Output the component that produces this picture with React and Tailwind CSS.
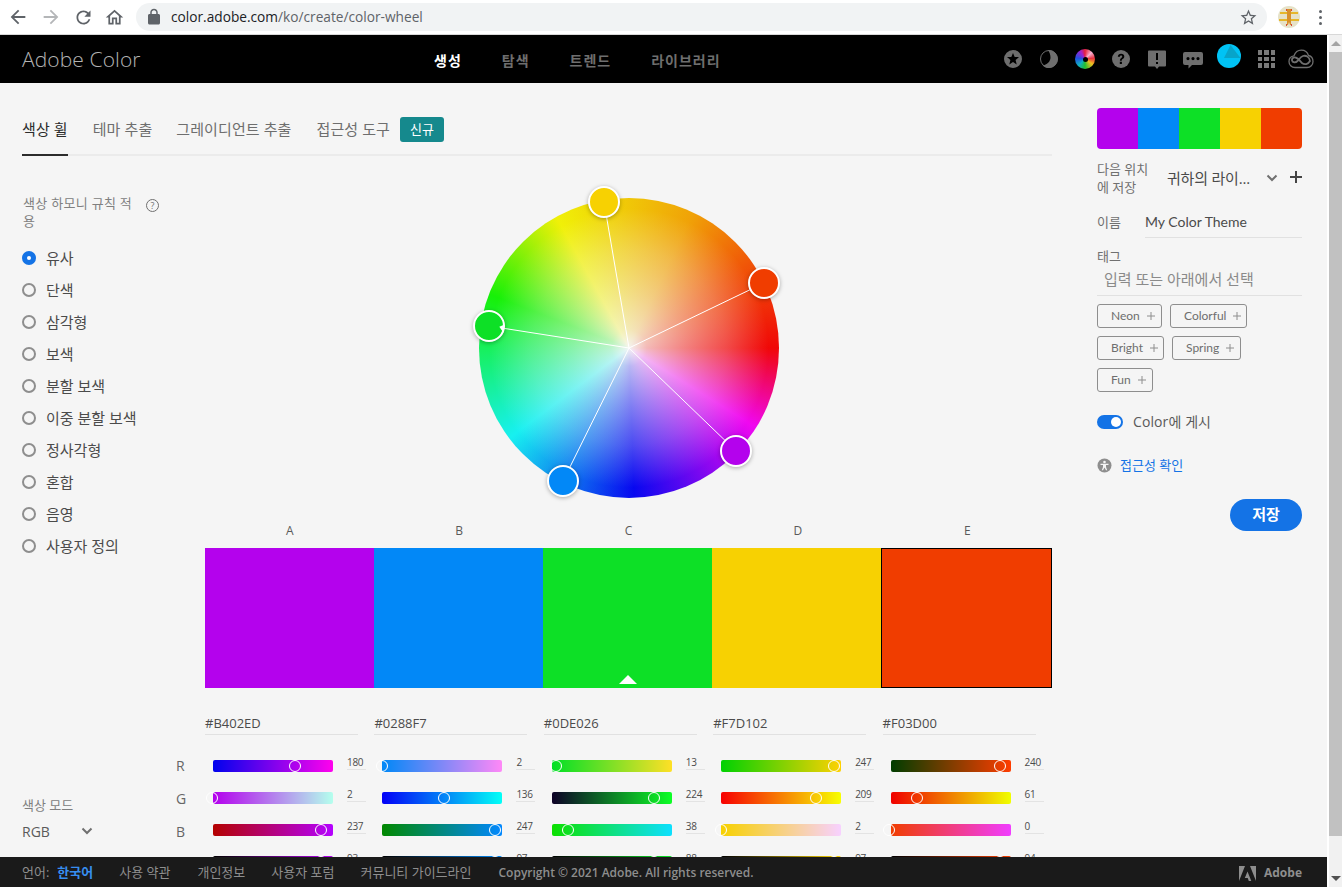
import React from "react";

const colors = [
  { name: "A", hex: "#B402ED", rgb: [180, 2, 237], v: 93 },
  { name: "B", hex: "#0288F7", rgb: [2, 136, 247], v: 97 },
  { name: "C", hex: "#0DE026", rgb: [13, 224, 38], v: 88 },
  { name: "D", hex: "#F7D102", rgb: [247, 209, 2], v: 97 },
  { name: "E", hex: "#F03D00", rgb: [240, 61, 0], v: 94 },
];

const rules = ["유사", "단색", "삼각형", "보색", "분할 보색", "이중 분할 보색", "정사각형", "혼합", "음영", "사용자 정의"];

const handles = [
  { x: 125, y: 4, fill: "#F7D102" },
  { x: 285, y: 85, fill: "#F03D00" },
  { x: 257, y: 253, fill: "#B402ED" },
  { x: 84, y: 283, fill: "#0288F7" },
  { x: 10, y: 128, fill: "#0DE026" },
];

const sliderGradient = (rgb, i) => {
  const from = [...rgb];
  const to = [...rgb];
  from[i] = 0;
  to[i] = 255;
  return `linear-gradient(to right, rgb(${from.join(",")}), rgb(${to.join(",")}))`;
};

const Slider = ({ background, value, percent }) => (
  <div className="flex items-start h-[17px] mb-[15px]">
    <div className="relative w-[120px] h-[12px] ml-[8px] mt-[5px] rounded-[2px]" style={{ background }}>
      <span
        className="absolute top-0 w-[12px] h-[12px] rounded-full border border-white"
        style={{ left: -7.5 + percent * 118 }}
      />
    </div>
    <div className="w-[19px] ml-[14px] h-[15px] border-b border-[#e3e3e3] text-[10px] tracking-[-0.3px] leading-[14px] text-[#4b4b4b]">{value}</div>
  </div>
);

const ColorColumn = ({ color }) => (
  <div>
    <div className="w-[153px] h-[25px] border-b border-[#e1e1e1] text-[13px] leading-[26px] text-[#4b4b4b]">{color.hex}</div>
    <div className="mt-[20px]">
      {color.rgb.map((value, i) => (
        <Slider key={i} value={value} percent={value / 255} background={sliderGradient(color.rgb, i)} />
      ))}
      <Slider
        value={color.v}
        percent={color.v / 100}
        background={`linear-gradient(to right, #000, rgb(${color.rgb.join(",")}))`}
      />
    </div>
  </div>
);

const ColorWheel = () => (
  <div className="relative w-[300px] h-[300px] mx-auto rounded-full [background:radial-gradient(circle_closest-side,rgba(245,245,245,0.98)_0%,rgba(245,245,245,0.75)_12%,rgba(245,245,245,0.52)_38%,rgba(245,245,245,0.3)_65%,rgba(245,245,245,0.03)_93%),conic-gradient(from_90deg,#f00000_0deg,#f000f0_32deg,#0000f0_88deg,#10f0f0_143deg,#10f000_201deg,#f0f000_241deg,#f0a000_295deg,#f05000_325deg,#f00000_360deg)]">
    <svg className="absolute inset-0 overflow-visible" width="300" height="300" viewBox="0 0 300 300">
      {handles.map((h, i) => (
        <line key={i} x1="150" y1="150" x2={h.x} y2={h.y} stroke="#fff" strokeWidth="1" />
      ))}
      {handles.map((h, i) => (
        <circle
          key={i}
          cx={h.x}
          cy={h.y}
          r="15"
          fill={h.fill}
          stroke="#fff"
          strokeWidth="2"
          className="[filter:drop-shadow(0_1px_2px_rgba(0,0,0,0.3))]"
        />
      ))}
      <path d="M20.3 128.7 25.6 126.5 24.5 134.7Z" fill="#fff" />
    </svg>
  </div>
);

const Chevron = ({ className }) => (
  <svg className={className} width="12" height="8" viewBox="0 0 12 8" fill="none">
    <path d="M1.5 1.5 6 6l4.5-4.5" stroke="currentColor" strokeWidth="2" />
  </svg>
);

const ChromeIcon = ({ d, className, size = 24 }) => (
  <svg className={className} width={size} height={size} viewBox="0 0 24 24" fill="currentColor">
    <path d={d} />
  </svg>
);

const HeaderIcons = () => (
  <div className="ml-auto flex items-center pr-[8px] text-[#6e6e6e]">
    <div className="w-[36px] flex justify-center">
      <svg width="22" height="22" viewBox="0 0 22 22">
        <path
          fillRule="evenodd"
          fill="currentColor"
          d="M11 2a9 9 0 1 1 0 18 9 9 0 0 1 0-18ZM11 5l-1.7 4H5l3.4 3-1.1 4.5L11 14l3.700 2.500-1.100-4.500L17 9h-4.300Z"
        />
      </svg>
    </div>
    <div className="w-[36px] flex justify-center">
      <svg width="22" height="22" viewBox="0 0 22 22">
        <circle cx="11" cy="11" r="8.500" fill="none" stroke="currentColor" strokeWidth="1" />
        <path d="M10 2A9 9 0 1 1 4.500 17.500C9 17 12.500 13.500 12.500 9.500 12.500 7 11.500 4 10 2Z" fill="currentColor" />
      </svg>
    </div>
    <div className="w-[36px] flex justify-center">
      <div className="w-[20px] h-[20px] rounded-full flex items-center justify-center bg-[conic-gradient(#e8203a_0deg,#f8b0d0_45deg,#e83040_85deg,#f0c020_125deg,#20c030_180deg,#10b0c0_225deg,#2050e0_275deg,#a020d0_330deg,#e8203a_360deg)]">
        <div className="w-[5px] h-[5px] rounded-full bg-black" />
      </div>
    </div>
    <div className="w-[36px] flex justify-center">
      <svg width="22" height="22" viewBox="0 0 22 22">
        <circle cx="11" cy="11" r="9" fill="currentColor" />
        <path d="M7.800 8.800C7.900 6.900 9.200 5.800 11.100 5.800c1.900 0 3.200 1.100 3.200 2.700 0 1.200-.6 1.900-1.500 2.500-.8.500-1 .9-1 1.700H9.900c0-1.400.4-2.100 1.400-2.800.6-.4.900-.8.900-1.300 0-.6-.4-1-1.100-1-.7 0-1.200.4-1.200 1.200ZM9.800 13.800h2.100v2.200H9.800Z" fill="#000" />
      </svg>
    </div>
    <div className="w-[36px] flex justify-center">
      <svg width="22" height="22" viewBox="0 0 22 22">
        <path fillRule="evenodd" fill="currentColor" d="M3 2.500h16a1 1 0 0 1 1 1v14a1 1 0 0 1-1 1h-6L11 21l-2-2.500H3a1 1 0 0 1-1-1v-14a1 1 0 0 1 1-1ZM10 5v7h2V5ZM10 14v2h2v-2Z" />
      </svg>
    </div>
    <div className="w-[36px] flex justify-center">
      <svg width="22" height="22" viewBox="0 0 22 22">
        <path fillRule="evenodd" fill="currentColor" d="M3 4h16a2 2 0 0 1 2 2v9a2 2 0 0 1-2 2H10l-3.500 3.500V17H3a2 2 0 0 1-2-2V6a2 2 0 0 1 2-2ZM6 9a1.600 1.600 0 1 0 0 3.200A1.600 1.600 0 0 0 6 9ZM11 9a1.600 1.600 0 1 0 0 3.200A1.600 1.600 0 0 0 11 9ZM16 9a1.600 1.600 0 1 0 0 3.200A1.600 1.600 0 0 0 16 9Z" />
      </svg>
    </div>
    <div className="w-[36px] flex justify-center -mt-[6px]">
      <svg width="24" height="24" viewBox="0 0 24 24">
        <circle cx="12" cy="12" r="12" fill="#00c3f5" />
        <path d="M13.500 1 23.500 14H7Z" fill="#07a4c9" />
      </svg>
    </div>
    <div className="w-[36px] flex justify-center">
      <div className="grid grid-cols-3 gap-[2px] ml-[3px]">
        {[...Array(9)].map((_, i) => (
          <div key={i} className="w-[4.500px] h-[4.500px] bg-[#7a7a7a]" />
        ))}
      </div>
    </div>
    <div className="w-[36px] flex justify-center">
      <svg width="26" height="20" viewBox="0 0 26 20" fill="none" stroke="currentColor">
        <path strokeWidth="1.300" d="M7 18.500C3.500 18.500 1 15.800 1 12.500 1 9.500 3.100 7.200 6 6.800 7.200 3.300 10 1.200 13.300 1.200c3.400 0 6.200 2.100 7.200 5.300 2.700.6 4.500 3 4.500 6 0 3.300-2.500 6-6 6Z" />
        <path strokeWidth="1.800" d="M22 12C21.500 8 18 6 15 7 12.500 7.800 11 10.500 9.500 12 7.500 14 4.500 13.500 4 11.500 3.500 9.500 5.500 8 7.500 8.500 10 9 12 12 14 14 16.500 16 20 15.500 22 12Z" />
      </svg>
    </div>
  </div>
);

const Tag = ({ label, className }) => (
  <div className={`flex items-center h-[24px] pl-[13px] border border-[#8e8e8e] rounded-[3px] font-['Lato',sans-serif] text-[12px] text-[#6e6e6e] ${className}`}>
    {label}
    <svg className="ml-[7px]" width="8" height="8" viewBox="0 0 8 8">
      <path d="M4 0v8M0 4h8" stroke="#8e8e8e" strokeWidth="1" />
    </svg>
  </div>
);

const RightPanel = () => (
  <aside className="w-[205px] pt-[25px] shrink-0">
    <div className="flex h-[41px] rounded-[4px] overflow-hidden">
      {colors.map((c) => (
        <div key={c.name} className="flex-1" style={{ background: c.hex }} />
      ))}
    </div>
    <div className="flex items-center mt-[11px]">
      <div className="w-[56px] text-[13px] leading-[18px] text-[#707070]">다음 위치에 저장</div>
      <div className="ml-[14px] w-[94px] text-[15px] tracking-[-0.2px] whitespace-nowrap text-[#4b4b4b]">귀하의 라이...</div>
      <Chevron className="ml-[5px] text-[#707070]" />
      <svg className="ml-[12px] -mt-[2px]" width="12" height="12" viewBox="0 0 12 12">
        <path d="M6 0v12M0 6h12" stroke="#444" strokeWidth="2" />
      </svg>
    </div>
    <div className="flex items-center mt-[12px]">
      <div className="w-[48px] text-[13px] text-[#707070]">이름</div>
      <div className="flex-1 h-[30px] leading-[27px] border-b border-[#e1e1e1] font-['Lato',sans-serif] text-[14px] text-[#4b4b4b]">My Color Theme</div>
    </div>
    <div className="mt-[9px] text-[13px] leading-[18px] text-[#707070]">태그</div>
    <div className="h-[31px] pl-[7px] leading-[28px] border-b border-[#e1e1e1] text-[15px] text-[#8a8a8a]">입력 또는 아래에서 선택</div>
    <div className="flex flex-col gap-[8px] mt-[8px]">
      <div className="flex gap-[8px]">
        <Tag label="Neon" className="w-[65px]" />
        <Tag label="Colorful" className="w-[77px]" />
      </div>
      <div className="flex gap-[8px]">
        <Tag label="Bright" className="w-[67px]" />
        <Tag label="Spring" className="w-[69px]" />
      </div>
      <Tag label="Fun" className="w-[56px]" />
    </div>
    <div className="flex items-center mt-[19px]">
      <div className="flex items-center justify-end w-[26px] h-[14px] pr-[2px] rounded-full bg-[#1473e6]">
        <div className="w-[10px] h-[10px] rounded-full bg-white" />
      </div>
      <span className="ml-[10px] text-[14px] tracking-[0.1px] text-[#5a5a5a]">Color에 게시</span>
    </div>
    <div className="flex items-center mt-[24px]">
      <svg width="15" height="15" viewBox="0 0 15 15">
        <circle cx="7.500" cy="7.500" r="7" fill="#8e8e8e" />
        <circle cx="7.500" cy="4" r="1.300" fill="#f5f5f5" />
        <path d="M3.500 5.800h8v1.200H9v2l1.200 3.300H9L7.500 9.500 6 12.300H4.800L6 9V7H3.500Z" fill="#f5f5f5" />
      </svg>
      <a className="ml-[8px] text-[13px] text-[#1473e6]">접근성 확인</a>
    </div>
    <div className="flex justify-end mt-[23px]">
      <button className="w-[72px] h-[32px] rounded-full bg-[#1473e6] text-white text-[15px] font-bold">저장</button>
    </div>
  </aside>
);

const Main = () => (
  <main className="w-[1030px] shrink-0">
    <nav className="flex items-center h-[73px] pt-[22px] border-b-2 border-[#ebebeb] text-[15px] tracking-[0.1px] text-[#6e6e6e]">
      <div className="relative h-full flex items-center text-[#2c2c2c]">
        색상 휠
        <div className="absolute left-0 right-0 -bottom-[2px] h-[2px] bg-[#2c2c2c]" />
      </div>
      <div className="ml-[25px]">테마 추출</div>
      <div className="ml-[24px]">그레이디언트 추출</div>
      <div className="ml-[25px]">접근성 도구</div>
      <div className="ml-[10px] flex items-center justify-center w-[44px] h-[25px] rounded-[3px] bg-[#15898d] text-white text-[13px]">신규</div>
    </nav>
    <div className="flex">
      <div className="w-[183px] shrink-0 pt-[38px]">
        <div className="flex items-start">
          <div className="w-[112px] ml-[1px] text-[13px] tracking-[0.3px] leading-[18px] text-[#808080]">색상 하모니 규칙 적용</div>
          <div className="ml-[11px] mt-[5px] flex items-center justify-center w-[13px] h-[13px] rounded-full border border-[#707070] text-[9px] leading-none text-[#707070]">?</div>
        </div>
        <div className="mt-[12px] flex flex-col">
          {rules.map((rule, i) => (
            <div key={rule} className="flex items-center h-[32px]">
              {i === 0 ? (
                <div className="flex items-center justify-center w-[14px] h-[14px] rounded-full bg-[#1473e6]">
                  <div className="w-[4px] h-[4px] rounded-full bg-white" />
                </div>
              ) : (
                <div className="w-[14px] h-[14px] rounded-full border-2 border-[#8e8e8e]" />
              )}
              <span className="ml-[10px] text-[15px] text-[#4b4b4b]">{rule}</span>
            </div>
          ))}
        </div>
        <div className="mt-[234px] text-[13px] text-[#808080]">색상 모드</div>
        <div className="flex items-center mt-[5px] text-[14px] text-[#5a5a5a]">
          <span className="w-[59px]">RGB</span>
          <Chevron className="text-[#707070]" />
        </div>
      </div>
      <div className="w-[847px] shrink-0 pt-[42px]">
        <ColorWheel />
        <div className="grid grid-cols-5 mt-[24px] text-center text-[12px] leading-[18px] text-[#5a5a5a]">
          {colors.map((c) => (
            <div key={c.name}>{c.name}</div>
          ))}
        </div>
        <div className="flex h-[140px] mt-[8px]">
          {colors.map((c, i) => (
            <div
              key={c.name}
              className={`relative ${i === 4 ? "w-[171px] border border-black" : "w-[169px]"}`}
              style={{ background: c.hex }}
            >
              {i === 2 && (
                <div className="absolute bottom-[4px] left-[76px] w-0 h-0 border-x-[9px] border-x-transparent border-b-[9px] border-b-white" />
              )}
            </div>
          ))}
        </div>
        <div className="relative grid grid-cols-5 mt-[22px]">
          <div className="absolute -left-[29px] top-[47px] flex flex-col gap-[15px] text-[14px] leading-[18px] text-[#666]">
            <span>R</span>
            <span>G</span>
            <span>B</span>
          </div>
          {colors.map((c) => (
            <ColorColumn key={c.name} color={c} />
          ))}
        </div>
      </div>
    </div>
  </main>
);

const Footer = () => (
  <footer className="flex items-center h-[30px] shrink-0 pl-[22px] pr-[25px] pt-[2px] bg-[#1a1a1a] text-[13px] text-[#8e8e8e]">
    <span>언어:</span>
    <span className="ml-[8px] font-bold text-[#378ef0]">한국어</span>
    <span className="ml-[26px]">사용 약관</span>
    <span className="ml-[27px]">개인정보</span>
    <span className="ml-[26px]">사용자 포럼</span>
    <span className="ml-[26px]">커뮤니티 가이드라인</span>
    <span className="ml-[27px] text-[12px] font-semibold">Copyright © 2021 Adobe. All rights reserved.</span>
    <svg className="ml-auto" width="17" height="15" viewBox="0 0 17 15" fill="#8e8e8e">
      <path d="M0 0h6L0 15ZM11 0h6v15ZM8.500 5.500 12.300 15H9.800L8.700 12H5.800Z" />
    </svg>
    <span className="ml-[8px] text-[12px] font-bold">Adobe</span>
  </footer>
);

export default function App() {
  return (
    <div className="w-[1342px] h-[887px] flex flex-col overflow-hidden bg-white font-['Open_Sans','Noto_Sans_CJK_KR',sans-serif]">
      <div className="flex items-center h-[35px] shrink-0 border-b border-[#d8d8d8] text-[#5f6368]">
        <ChromeIcon className="ml-[7px]" size={22} d="M20 11H7.830l5.590-5.590L12 4l-8 8 8 8 1.410-1.410L7.830 13H20v-2z" />
        <ChromeIcon className="ml-[11px] text-[#b4b6b8]" size={22} d="M12 4l-1.410 1.410L16.170 11H4v2h12.170l-5.580 5.590L12 20l8-8z" />
        <ChromeIcon className="ml-[11px]" size={21} d="M17.650 6.350C16.200 4.900 14.210 4 12 4c-4.420 0-7.990 3.580-7.990 8s3.570 8 7.990 8c3.730 0 6.840-2.550 7.730-6h-2.080c-.82 2.330-3.040 4-5.650 4-3.310 0-6-2.690-6-6s2.690-6 6-6c1.660 0 3.140.69 4.220 1.780L13 11h7V4l-2.350 2.350z" />
        <ChromeIcon className="ml-[10px]" size={21} d="M12 5.690l5 4.500V18h-2v-6H9v6H7v-7.810l5-4.500M12 3L2 12h3v8h6v-6h2v6h6v-8h3L12 3z" />
        <div className="flex items-center ml-[11px] w-[1131px] h-[28px] rounded-full bg-[#f1f3f4]">
          <ChromeIcon className="ml-[9px]" size={18} d="M18 8h-1V6c0-2.760-2.240-5-5-5S7 3.240 7 6v2H6c-1.100 0-2 .9-2 2v10c0 1.100.9 2 2 2h12c1.100 0 2-.9 2-2V10c0-1.100-.9-2-2-2zM9 6c0-1.660 1.340-3 3-3s3 1.340 3 3v2H9V6z" />
          <span className="ml-[8px] text-[13.700px] text-[#202124]">
            color.adobe.com<span className="text-[#5f6368]">/ko/create/color-wheel</span>
          </span>
          <ChromeIcon className="ml-auto mr-[9px]" size={19} d="M22 9.240l-7.190-.62L12 2 9.190 8.630 2 9.240l5.460 4.730L5.820 21 12 17.270 18.180 21l-1.630-7.030L22 9.240zM12 15.400l-3.760 2.270 1-4.280-3.320-2.880 4.380-.38L12 6.100l1.710 4.040 4.380.38-3.320 2.880 1 4.280L12 15.400z" />
        </div>
        <svg className="ml-[11px]" width="22" height="22" viewBox="0 0 22 22">
          <circle cx="11" cy="11" r="11" fill="#e6e2c8" />
          <path d="M2 6h18v2H2ZM1 13h20v2H1Z" fill="#e6b72a" />
          <path d="M9 3h4v16h-1l-1-3-1 3H9Z" fill="#d8902a" />
          <path d="M8 3h1v2H8ZM13 3h1v2h-1ZM8 18h1v2H8ZM13 18h1v2h-1Z" fill="#d84a3a" />
        </svg>
        <div className="ml-[19px] flex flex-col gap-[3px]">
          <div className="w-[3px] h-[3px] rounded-full bg-[#5f6368]" />
          <div className="w-[3px] h-[3px] rounded-full bg-[#5f6368]" />
          <div className="w-[3px] h-[3px] rounded-full bg-[#5f6368]" />
        </div>
      </div>
      <div className="flex flex-1 min-h-0">
        <div className="flex flex-col w-[1327px] shrink-0">
          <header className="flex items-center h-[48px] shrink-0 bg-black">
            <div className="w-[434px] pl-[22px] pt-[2px] text-[21px] font-light tracking-[0.1px] text-[#b3b3b3]">Adobe Color</div>
            <nav className="flex gap-[40px] pt-[2px] text-[14px] font-bold tracking-[1px] text-[#6e6e6e]">
              <span className="text-white">생성</span>
              <span>탐색</span>
              <span>트렌드</span>
              <span>라이브러리</span>
            </nav>
            <HeaderIcons />
          </header>
          <div className="flex flex-1 min-h-0 overflow-hidden pl-[22px] bg-[#f5f5f5]">
            <Main />
            <div className="ml-[45px]">
              <RightPanel />
            </div>
          </div>
          <Footer />
        </div>
        <div className="flex flex-col items-center w-[15px] border-l-2 border-white bg-[#f1f1f1]">
          <div className="h-[17px] pt-[6px] shrink-0">
            <div className="w-0 h-0 border-x-[5px] border-x-transparent border-b-[5px] border-b-[#a3a3a3]" />
          </div>
          <div className="w-full h-[784px] shrink-0 bg-[#c1c1c1]" />
          <div className="mt-auto mb-[6px] w-0 h-0 border-x-[5px] border-x-transparent border-t-[5px] border-t-[#505050]" />
        </div>
      </div>
    </div>
  );
}
